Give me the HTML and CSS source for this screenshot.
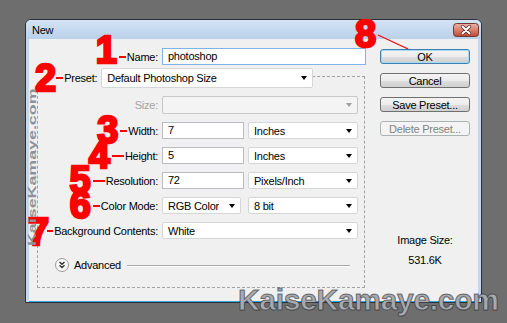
FILE: index.html
```html
<!DOCTYPE HTML>
<html>
<head>
  <meta charset="UTF-8">
  <title>New</title>
  <meta name="viewport" content="width=device-width, initial-scale=1">
  <link rel="stylesheet" href="styles.css">
</head>
<body>
  <div class="dialog">
    <div class="titlebar">
      <span class="title">New</span>
      <span class="close-btn">
        <svg width="26" height="14" viewBox="0 0 26 14">
          <defs>
            <linearGradient id="cg" x1="0" y1="0" x2="0" y2="1">
              <stop offset="0" stop-color="#eab2a6"/>
              <stop offset="0.5" stop-color="#d9806f"/>
              <stop offset="1" stop-color="#c4442f"/>
            </linearGradient>
          </defs>
          <rect x="0.5" y="0.5" width="25" height="13" rx="3" fill="url(#cg)" stroke="#6b3b36"/>
          <path d="M9.5 3.5 L16.5 10.5 M16.5 3.5 L9.5 10.5" stroke="#5a2a24" stroke-width="3.4" stroke-linecap="round"/>
          <path d="M9.5 3.5 L16.5 10.5 M16.5 3.5 L9.5 10.5" stroke="#fff" stroke-width="2" stroke-linecap="round"/>
        </svg>
      </span>
    </div>

    <div class="client">
      <div class="form">
        <div class="name-row">
          <label class="lbl"><span class="tag"><b class="num num-1">1</b><i class="dash"></i></span>Name:</label>
          <div class="input input-focus">photoshop</div>
        </div>

        <fieldset class="preset-box">
          <legend>
            <div class="legend-row">
              <span class="tag"><b class="num num-2">2</b><i class="dash dash-tight"></i></span>
              <span class="legend-text">Preset:</span>
              <div class="select select-preset">Default Photoshop Size<i class="arrow"></i></div>
            </div>
          </legend>

          <div class="rows">
            <label class="lbl lbl-off">Size:</label>
            <div class="select select-off"><i class="arrow"></i></div>

            <label class="lbl"><span class="tag"><b class="num">3</b><i class="dash"></i></span>Width:</label>
            <div class="pair">
              <div class="input">7</div>
              <div class="select">Inches<i class="arrow"></i></div>
            </div>

            <label class="lbl"><span class="tag"><b class="num">4</b><i class="dash dash-long"></i></span>Height:</label>
            <div class="pair">
              <div class="input">5</div>
              <div class="select">Inches<i class="arrow"></i></div>
            </div>

            <label class="lbl"><span class="tag"><b class="num">5</b><i class="dash dash-long"></i></span>Resolution:</label>
            <div class="pair">
              <div class="input">72</div>
              <div class="select">Pixels/Inch<i class="arrow"></i></div>
            </div>

            <label class="lbl"><span class="tag"><b class="num">6</b><i class="dash"></i></span>Color Mode:</label>
            <div class="pair pair-color">
              <div class="select">RGB Color<i class="arrow"></i></div>
              <div class="select">8 bit<i class="arrow"></i></div>
            </div>

            <label class="lbl"><span class="tag"><b class="num num-7">7</b><i class="dash dash-short"></i></span>Background Contents:</label>
            <div class="select">White<i class="arrow"></i></div>
          </div>

          <div class="advanced">
            <span class="adv-icon">
              <svg width="14" height="14" viewBox="0 0 14 14">
                <circle cx="7" cy="7" r="6.5" fill="#f7f7f7" stroke="#9a9a9a"/>
                <path d="M4.5 4 L7 6.3 L9.5 4 M4.5 7.3 L7 9.6 L9.5 7.3" fill="none" stroke="#333" stroke-width="1.4"/>
              </svg>
            </span>
            <span>Advanced</span>
            <span class="adv-line"></span>
          </div>
        </fieldset>
      </div>

      <div class="side">
        <div class="btn btn-default">OK</div>
        <div class="btn">Cancel</div>
        <div class="btn">Save Preset...</div>
        <div class="btn btn-off">Delete Preset...</div>
        <div class="image-size">
          <div>Image Size:</div>
          <div class="image-size-value">531.6K</div>
        </div>
      </div>
    </div>

    <b class="num num-8">8</b>
    <svg class="pointer" width="40" height="20" viewBox="0 0 40 20">
      <line x1="2" y1="1" x2="32" y2="15" stroke="#f00" stroke-width="1.2"/>
    </svg>
  </div>

  <div class="mark-side">KaiseKamaye.com</div>
  <div class="mark">KaiseKamaye.com</div>
</body>
</html>
```

FILE: styles.css
```css
body {
  margin: 0;
  padding: 19px 0 0 25px;
  height: 323px;
  box-sizing: border-box;
  overflow: hidden;
  position: relative;
  background: #6e6e6e;
  font-family: 'Liberation Sans', Arial, sans-serif;
  font-size: 11px;
  letter-spacing: -0.25px;
  color: #000;
}

.dialog {
  position: relative;
  width: 457px;
  height: 284px;
  box-sizing: border-box;
  border: 1px solid #2b323b;
  border-radius: 6px 6px 0 0;
  background: #c3d7ed;
  display: flex;
  flex-direction: column;
}

.titlebar {
  height: 19px;
  display: flex;
  align-items: center;
  justify-content: space-between;
  padding: 0 2px 0 6px;
  background: linear-gradient(#d3e3f4, #b9d1ea);
  border-radius: 5px 5px 0 0;
}

.close-btn { display: flex; }

.client {
  flex: 1;
  display: flex;
  margin: 0 3px 0 3px;
  padding: 9px 0 0 8px;
  background: #f0f0f0;
  border-bottom: 1px solid #39a6dc;
}

.form { width: 329px; }

.name-row {
  display: grid;
  grid-template-columns: 121px 204px;
  column-gap: 4px;
  height: 17px;
}

.lbl {
  display: flex;
  align-items: center;
  justify-content: flex-end;
  height: 17px;
  white-space: nowrap;
}

.lbl-off { color: #a3a3a3; height: 18px; }

.tag {
  display: flex;
  align-items: center;
}

.num {
  color: #f00;
  font-weight: bold;
  font-size: 38px;
  line-height: 17px;
  letter-spacing: 0;
  -webkit-text-stroke: 2.5px #f00;
}

.num-1 { transform: translateY(-6px); }
.num-7 { transform: translateY(2px); }

.dash {
  width: 7px;
  height: 2px;
  background: #f00;
  margin: 0 1px 0 2px;
}

.dash-long { width: 12px; }
.dash-short { width: 6px; margin-left: -2px; }
.dash-tight { margin-left: 0; }

.input {
  height: 17px;
  box-sizing: border-box;
  border: 1px solid #b9bcc1;
  background: #fff;
  padding-left: 5px;
  line-height: 15px;
}

.input-focus { border-color: #7eb4ea; }

.select {
  height: 17px;
  box-sizing: border-box;
  border: 1px solid #d6d6d6;
  border-radius: 2px;
  background: #fff;
  padding: 0 5px;
  display: flex;
  align-items: center;
  justify-content: space-between;
}

.select-preset { width: 212px; height: 20px; }

.select-off {
  height: 18px;
  background: #f4f4f4;
  border-color: #c8c8c8;
}

.arrow {
  width: 0;
  height: 0;
  border-left: 3.5px solid transparent;
  border-right: 3.5px solid transparent;
  border-top: 4px solid #000;
}

.select-off .arrow { margin-left: auto; border-top-color: #a0a0a0; }

.preset-box {
  margin: 0;
  padding: 0 6px 15px 0;
  width: 328px;
  min-width: 0;
  box-sizing: border-box;
  border: 1px dashed #a3a3a3;
}

.preset-box legend {
  padding: 3px 0 0 0;
  margin-left: -3px;
}

.legend-row {
  display: flex;
  align-items: center;
  height: 20px;
}

.legend-row .num { line-height: 20px; }

.legend-text { margin-right: 4px; }

.rows {
  display: grid;
  grid-template-columns: 120px 196px;
  grid-template-rows: 18px repeat(5, 17px);
  column-gap: 4px;
  row-gap: 8px;
  margin-top: 8px;
}

.pair {
  display: grid;
  grid-template-columns: 82px 110px;
  justify-content: space-between;
}

.pair-color { grid-template-columns: 79px 110px; }

.advanced {
  display: flex;
  align-items: center;
  gap: 5px;
  height: 14px;
  margin: 19px 8px 0 17px;
}

.adv-icon { display: flex; }

.adv-line {
  flex: 1;
  height: 1px;
  margin-left: 1px;
  background: #a9a9a9;
  box-shadow: 0 1px 0 #fff;
}

.side {
  width: 90px;
  margin-left: 14px;
  padding-top: 1px;
  display: flex;
  flex-direction: column;
  gap: 9px;
}

.btn {
  height: 15px;
  box-sizing: border-box;
  border: 1px solid #707070;
  border-radius: 3px;
  background: linear-gradient(#f4f4f4 0%, #ececec 50%, #dedede 51%, #d0d0d0 100%);
  display: flex;
  align-items: center;
  justify-content: center;
}

.btn-default {
  border-color: #3c7fb1;
  box-shadow: inset 0 0 0 1px #a6d9f4;
}

.btn-off {
  border-color: #adb2b5;
  background: #f4f4f4;
  color: #838383;
}

.image-size {
  margin-top: 89px;
  text-align: center;
  line-height: 13px;
}

.image-size-value { margin-top: 7px; }

.num-8 {
  position: absolute;
  left: 329px;
  top: 0;
  line-height: 28px;
}

.pointer {
  position: absolute;
  left: 350px;
  top: 14px;
}

.mark-side {
  position: absolute;
  left: 28px;
  top: 246px;
  font-weight: bold;
  font-size: 11px;
  line-height: 9px;
  letter-spacing: 0;
  color: #8c929b;
  white-space: nowrap;
  transform-origin: 0 0;
  transform: rotate(-90deg) scaleX(1.62);
}

.mark {
  position: absolute;
  left: 238px;
  top: 285px;
  font-weight: bold;
  font-size: 30px;
  line-height: 29px;
  letter-spacing: -0.3px;
  white-space: nowrap;
  color: #a6a9ae;
  -webkit-text-stroke: 1px rgba(20, 20, 20, 0.55);
}
```
